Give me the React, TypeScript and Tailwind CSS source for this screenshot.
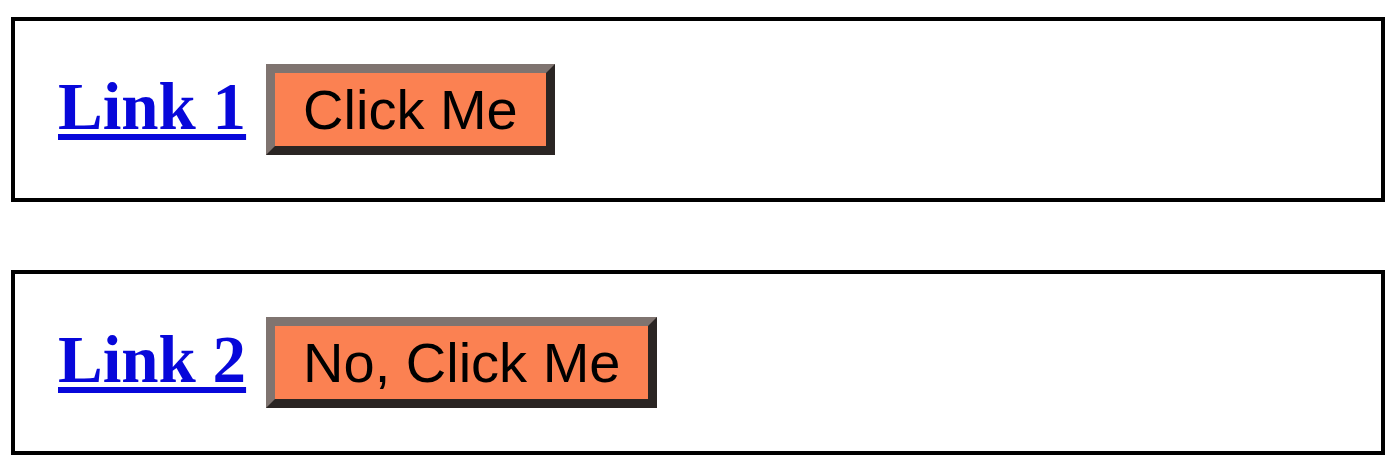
export default function App() {
    const rows = [
        { link: 'Link 1', label: 'Click Me' },
        { link: 'Link 2', label: 'No, Click Me' },
    ];

    return (
        <div className="min-h-screen bg-white pt-[17px] pl-[11px]">
            <div className="flex flex-col gap-[68px] w-[1374px]">
                {rows.map((row) => (
                    <div key={row.link} className="border-4 border-black px-[43px] h-[185px] flex items-center">
                        <div className="flex items-baseline gap-[20px]">
                            <a
                                href="#"
                                className="text-[67px] font-bold text-[#0707da] underline decoration-[6px] underline-offset-[5px] leading-none"
                                style={{ fontFamily: '"Liberation Serif", "Times New Roman", serif' }}
                            >
                                {row.link}
                            </a>
                            <button
                                className="h-[91px] bg-[#fb8152] border-[9px] border-t-[#7f7470] border-l-[#7f7470] border-b-[#2a2523] border-r-[#2a2523] px-[28px] text-[56px] leading-[64px] text-black"
                                style={{ fontFamily: '"Liberation Sans", Arial, sans-serif' }}
                            >
                                {row.label}
                            </button>
                        </div>
                    </div>
                ))}
            </div>
        </div>
    );
}
